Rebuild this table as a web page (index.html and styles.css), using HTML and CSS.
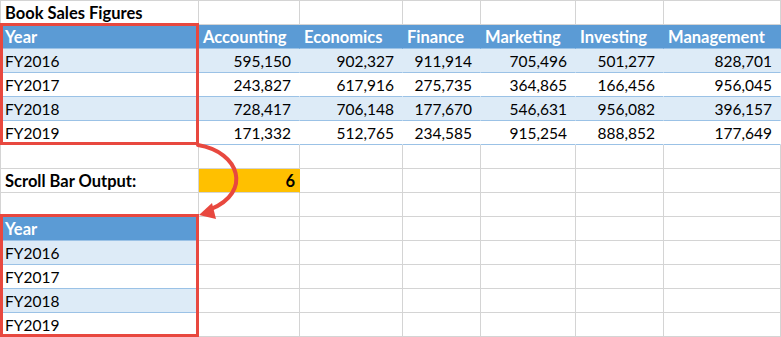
FILE: index.html
```html
<!DOCTYPE html>
<html>
<head>
<meta charset="utf-8">
<title>Book Sales Figures</title>
<link rel="stylesheet" href="styles.css">
</head>
<body>
<div class="page">
	<div class="sheet">
		<!-- row 1 -->
		<div class="c title">Book Sales Figures</div><div class="c"></div><div class="c"></div><div class="c"></div><div class="c"></div><div class="c"></div><div class="c"></div>
		<!-- table header -->
		<div class="c hd">Year</div><div class="c hd">Accounting</div><div class="c hd">Economics</div><div class="c hd">Finance</div><div class="c hd">Marketing</div><div class="c hd">Investing</div><div class="c hd">Management</div>
		<div class="c band">FY2016</div><div class="c band num">595,150</div><div class="c band num">902,327</div><div class="c band num">911,914</div><div class="c band num">705,496</div><div class="c band num">501,277</div><div class="c band num">828,701</div>
		<div class="c plain">FY2017</div><div class="c plain num">243,827</div><div class="c plain num">617,916</div><div class="c plain num">275,735</div><div class="c plain num">364,865</div><div class="c plain num">166,456</div><div class="c plain num">956,045</div>
		<div class="c band">FY2018</div><div class="c band num">728,417</div><div class="c band num">706,148</div><div class="c band num">177,670</div><div class="c band num">546,631</div><div class="c band num">956,082</div><div class="c band num">396,157</div>
		<div class="c plain">FY2019</div><div class="c plain num">171,332</div><div class="c plain num">512,765</div><div class="c plain num">234,585</div><div class="c plain num">915,254</div><div class="c plain num">888,852</div><div class="c plain num">177,649</div>
		<!-- blank -->
		<div class="c"></div><div class="c"></div><div class="c"></div><div class="c"></div><div class="c"></div><div class="c"></div><div class="c"></div>
		<!-- scroll bar output -->
		<div class="c title">Scroll Bar Output:</div><div class="c output">6</div><div class="c"></div><div class="c"></div><div class="c"></div><div class="c"></div><div class="c"></div>
		<div class="c"></div><div class="c"></div><div class="c"></div><div class="c"></div><div class="c"></div><div class="c"></div><div class="c"></div>
		<!-- result table -->
		<div class="c hd">Year</div><div class="c"></div><div class="c"></div><div class="c"></div><div class="c"></div><div class="c"></div><div class="c"></div>
		<div class="c band">FY2016</div><div class="c"></div><div class="c"></div><div class="c"></div><div class="c"></div><div class="c"></div><div class="c"></div>
		<div class="c plain">FY2017</div><div class="c"></div><div class="c"></div><div class="c"></div><div class="c"></div><div class="c"></div><div class="c"></div>
		<div class="c band">FY2018</div><div class="c"></div><div class="c"></div><div class="c"></div><div class="c"></div><div class="c"></div><div class="c"></div>
		<div class="c plain">FY2019</div><div class="c"></div><div class="c"></div><div class="c"></div><div class="c"></div><div class="c"></div><div class="c"></div>
	</div>

	<div class="mark mark-top"></div>
	<div class="mark mark-bottom"></div>
	<svg class="arrow" width="80" height="100" viewBox="180 130 80 100">
		<path d="M198 145 C 240 152, 252 192, 211 209" fill="none" stroke="#e8483f" stroke-width="4" stroke-linecap="round"/>
		<polygon points="199,215 212,203 216,219" fill="#e8483f"/>
	</svg>
</div>
</body>
</html>
```

FILE: styles.css
```css
* {
	box-sizing: border-box;
}

body {
	margin: 0;
	font-family: 'Lato', 'Liberation Sans', sans-serif;
	font-size: 15.5px;
	color: #000;
	background: #fff;
}

.page {
	position: relative;
}

.sheet {
	display: grid;
	grid-template-columns: 198px 101px 103px 78px 95px 88px 117px;
	grid-auto-rows: 24px;
	width: max-content;
	border-top: 1px solid #d4d4d4;
	border-left: 1px solid #d4d4d4;
}

.c {
	border-right: 1px solid #d4d4d4;
	border-bottom: 1px solid #d4d4d4;
	padding: 0 4px;
	line-height: 24px;
	white-space: nowrap;
	overflow: hidden;
}

.num {
	text-align: right;
	padding-right: 8px;
}

.title {
	font-weight: bold;
	font-size: 16.5px;
}

.hd {
	background: #5b9bd5;
	color: #fff;
	font-weight: bold;
	font-size: 16.5px;
	border-right-color: #5b9bd5;
	border-bottom-color: #9bc2e6;
}

.band {
	background: #ddebf7;
	border-right-color: #ddebf7;
	border-bottom-color: #9bc2e6;
}

.plain {
	background: #fff;
	border-right-color: #fff;
	border-bottom-color: #9bc2e6;
}

.output {
	background: #ffc000;
	border-right-color: #ffc000;
	font-weight: bold;
	font-size: 16.5px;
	text-align: right;
	padding-right: 4px;
}

/* red highlight boxes drawn over the sheet */
.mark {
	position: absolute;
	left: 0;
	width: 199px;
	border: 3px solid #e8483f;
}

.mark-top {
	top: 23px;
	height: 122px;
}

.mark-bottom {
	top: 214px;
	height: 123px;
}

.arrow {
	position: absolute;
	left: 180px;
	top: 130px;
}
```
